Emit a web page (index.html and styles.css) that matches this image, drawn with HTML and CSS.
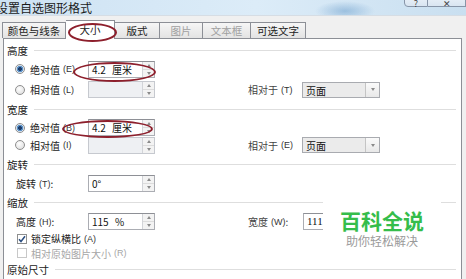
FILE: index.html
```html
<!DOCTYPE html>
<html lang="zh-CN">
<head>
  <meta charset="UTF-8">
  <title>设置自选图形格式</title>
  <link rel="stylesheet" href="styles.css">
</head>
<body>
  <div class="window">
    <div class="titlebar">
      <span class="title">设置自选图形格式</span>
      <div class="caption">
        <span class="cap help">?</span>
        <span class="cap close">✕</span>
      </div>
    </div>

    <!-- 选项卡 -->
    <div class="tabs">
      <div class="tab w64">颜色与线条</div>
      <div class="tab w49 active">大小</div>
      <div class="tab w45">版式</div>
      <div class="tab w42 off">图片</div>
      <div class="tab w48 off">文本框</div>
      <div class="tab w55">可选文字</div>
    </div>

    <div class="panel">
      <div class="group h18">高度<span class="rule"></span></div>
      <div class="row h20">
        <div class="lead"><span class="radio on"></span>绝对值<span class="key">(E)</span></div>
        <div class="spin"><span class="val">4.2 厘米</span><span class="arrows"><i class="up"></i><i class="down"></i></span></div>
      </div>
      <div class="row h21">
        <div class="lead"><span class="radio"></span>相对值<span class="key">(L)</span></div>
        <div class="spin dis"><span class="val"></span><span class="arrows"><i class="up"></i><i class="down"></i></span></div>
        <div class="rel">相对于<span class="key">(T)</span></div>
        <div class="select"><span class="val">页面</span><span class="drop"><i></i></span></div>
      </div>

      <div class="group h19">宽度<span class="rule"></span></div>
      <div class="row h17">
        <div class="lead"><span class="radio on"></span>绝对值<span class="key">(B)</span></div>
        <div class="spin"><span class="val">4.2 厘米</span><span class="arrows"><i class="up"></i><i class="down"></i></span></div>
      </div>
      <div class="row h18">
        <div class="lead"><span class="radio"></span>相对值<span class="key">(I)</span></div>
        <div class="spin dis"><span class="val"></span><span class="arrows"><i class="up"></i><i class="down"></i></span></div>
        <div class="rel">相对于<span class="key">(E)</span></div>
        <div class="select"><span class="val">页面</span><span class="drop"><i></i></span></div>
      </div>

      <div class="group h21">旋转<span class="rule"></span></div>
      <div class="row h17">
        <div class="lead plain">旋转<span class="key">(T)</span>:</div>
        <div class="spin"><span class="val">0°</span><span class="arrows"><i class="up"></i><i class="down"></i></span></div>
      </div>

      <div class="group h21">缩放<span class="rule"></span></div>
      <div class="row h17">
        <div class="lead plain">高度<span class="key">(H)</span>:</div>
        <div class="spin"><span class="val">115 %</span><span class="arrows"><i class="up"></i><i class="down"></i></span></div>
        <div class="rel">宽度<span class="key">(W)</span>:</div>
        <div class="box"><span class="val serif">111</span></div>
      </div>
      <div class="row h17">
        <div class="check on">
          <svg width="10" height="10" viewBox="0 0 10 10"><path d="M2 5.2 L4 7.5 L8 2.2" fill="none" stroke="#2a4d80" stroke-width="1.5"/></svg>
        </div>锁定纵横比<span class="key">(A)</span>
      </div>
      <div class="row h12 muted">
        <div class="check"></div>相对原始图片大小<span class="key">(R)</span>
      </div>

      <div class="group h20">原始尺寸<span class="rule"></span></div>
    </div>

    <!-- 标注 -->
    <span class="mark m-tab"></span>
    <span class="mark m-h"></span>
    <span class="mark m-w"></span>

    <div class="watermark">
      <div class="wm-big">百科全说</div>
      <div class="wm-small">助你轻松解决</div>
    </div>
  </div>
</body>
</html>
```

FILE: styles.css
```css
body {
  margin: 0;
  font-family: "Noto Sans CJK SC", "Liberation Sans", sans-serif;
  font-size: 10px;
  color: #222;
}
.window {
  position: relative;
  width: 466px;
  height: 279px;
  overflow: hidden;
  background: #f0f0f0;
  display: flex;
  flex-direction: column;
}

/* 标题栏 */
.titlebar {
  height: 17px;
  display: flex;
  align-items: center;
  background:
    radial-gradient(ellipse 30px 10px at 345px 11px, rgba(110,160,205,0.55), rgba(110,160,205,0) 100%),
    linear-gradient(to right, #cde2f3, #dcecf8 55%, #c9dff0);
  border-bottom: 1px solid #d6dde4;
  box-sizing: border-box;
}
.title {
  margin-left: -4px;
  font-size: 12px;
  line-height: 12px;
  color: #1b1b1b;
}
.caption {
  margin-left: auto;
  align-self: flex-start;
  margin-top: -7px;
  display: flex;
}
.cap {
  height: 14px;
  border: 1px solid #8795a8;
  border-left: none;
  background: linear-gradient(#eef4fa, #d9e5f1);
  font-size: 9px;
  line-height: 20px;
  text-align: center;
  color: #444;
  box-sizing: border-box;
}
.help {
  width: 24px;
  border-left: 1px solid #8795a8;
  border-radius: 0 0 0 4px;
}
.close {
  width: 38px;
}

/* 选项卡 */
.tabs {
  height: 23px;
  display: flex;
  align-items: flex-end;
  padding-left: 2px;
}
.tab {
  height: 16px;
  box-sizing: border-box;
  border: 1px solid #8c8f96;
  border-bottom: none;
  border-left: none;
  background: linear-gradient(#f6f6f6, #e3e3e3);
  text-align: center;
  line-height: 15px;
  font-size: 10.5px;
}
.tab:first-child {
  border-left: 1px solid #8c8f96;
}
.tab.active {
  height: 19px;
  margin-bottom: -1px;
  background: #fff;
  position: relative;
  z-index: 1;
  line-height: 18px;
}
.tab.off {
  color: #a0a0a0;
}
.w64 { width: 64px; }
.w49 { width: 49px; }
.w45 { width: 45px; }
.w42 { width: 43px; }
.w48 { width: 48px; }
.w55 { width: 55px; }

/* 面板 */
.panel {
  flex: 1;
  margin-left: 3px;
  width: 459px;
  box-sizing: border-box;
  border: 1px solid #8c8f96;
  border-bottom: none;
  background: #fff;
  padding-top: 2px;
  display: flex;
  flex-direction: column;
}
.group {
  display: flex;
  align-items: center;
  padding-left: 3px;
  font-size: 10.5px;
}
.rule {
  flex: 1;
  height: 1px;
  background: #dedede;
  margin: 0 5px 0 6px;
}
.row {
  display: flex;
  align-items: center;
}
.h12 { height: 12px; }
.h17 { height: 17px; }
.h18 { height: 18px; }
.h19 { height: 19px; }
.h20 { height: 20px; }
.h21 { height: 21px; }

.lead {
  width: 84px;
  box-sizing: border-box;
  padding-left: 11px;
  display: flex;
  align-items: center;
}
.lead.plain {
  padding-left: 12px;
}
.key {
  font-family: "Liberation Sans", sans-serif;
  font-size: 9px;
  margin-left: 3px;
  color: #333;
}
.radio {
  width: 10px;
  height: 10px;
  box-sizing: border-box;
  border: 1px solid #8e8e8e;
  border-radius: 50%;
  background: radial-gradient(circle at 40% 35%, #ffffff, #d8d8d8);
  margin-right: 5px;
}
.radio.on {
  background: radial-gradient(circle, #1d3d6b 0 1.6px, #5d93c8 2.2px 3px, #e6edf5 3.6px);
}

.spin, .box {
  width: 67px;
  height: 17px;
  box-sizing: border-box;
  border: 1px solid #abadb3;
  border-top-color: #8e9096;
  background: #fff;
  display: flex;
}
.spin .val, .box .val, .select .val {
  flex: 1;
  padding-left: 3px;
  line-height: 15px;
  color: #111;
}
.spin .val {
  word-spacing: 4px;
}
.spin.dis {
  background: #eef0f3;
  border-color: #c6c9cf;
}
.arrows {
  width: 11px;
  border-left: 1px solid #d2d4d8;
  background: #f3f3f3;
  display: flex;
  flex-direction: column;
}
.arrows i {
  flex: 1;
  display: flex;
  align-items: center;
  justify-content: center;
}
.arrows i::after {
  content: "";
  border-left: 2.5px solid transparent;
  border-right: 2.5px solid transparent;
}
.arrows .up {
  border-bottom: 1px solid #dcdcdc;
}
.arrows .up::after {
  border-bottom: 3px solid #8a8a8a;
}
.arrows .down::after {
  border-top: 3px solid #8a8a8a;
}

.rel {
  margin-left: 93px;
  width: 54px;
  display: flex;
  align-items: center;
  color: #444;
}
.select {
  width: 78px;
  height: 16px;
  box-sizing: border-box;
  border: 1px solid #a9abb0;
  background: #ebebeb;
  display: flex;
}
.drop {
  width: 13px;
  border-left: 1px solid #c4c4c4;
  background: linear-gradient(#fafafa, #e8e8e8);
  display: flex;
  align-items: center;
  justify-content: center;
}
.drop i {
  border-left: 2.5px solid transparent;
  border-right: 2.5px solid transparent;
  border-top: 3px solid #8a8a8a;
}
.box {
  width: 60px;
  margin-left: 1px;
}
.serif {
  font-family: "Liberation Serif", serif;
  font-size: 11px;
}

.check {
  width: 10px;
  height: 10px;
  box-sizing: border-box;
  border: 1px solid #8e8f8f;
  background: #fff;
  margin: 0 4px 0 13px;
  display: flex;
}
.check svg {
  margin: -1px;
}
.muted {
  color: #a6a6a6;
}
.muted .key {
  color: #a6a6a6;
}
.muted .check {
  border-color: #c8c8c8;
}

/* 红圈标注 */
.mark {
  position: absolute;
  border: 2px solid #8d1f2c;
  border-radius: 50%;
  box-sizing: border-box;
  z-index: 2;
}
.m-tab { left: 68px; top: 23px; width: 49px; height: 19px; }
.m-h { left: 73px; top: 62px; width: 83px; height: 20px; }
.m-w { left: 62px; top: 120px; width: 91px; height: 18px; }

/* 水印 */
.watermark {
  position: absolute;
  left: 323px;
  top: 199px;
  width: 118px;
  height: 62px;
  background: #fff;
  text-align: center;
  padding-top: 9px;
  box-sizing: border-box;
  z-index: 2;
}
.wm-big {
  font-size: 21px;
  line-height: 24px;
  font-weight: bold;
  color: #35bd4b;
}
.wm-small {
  margin-top: 2px;
  font-size: 12px;
  line-height: 14px;
  color: #9a9a9a;
}
```
